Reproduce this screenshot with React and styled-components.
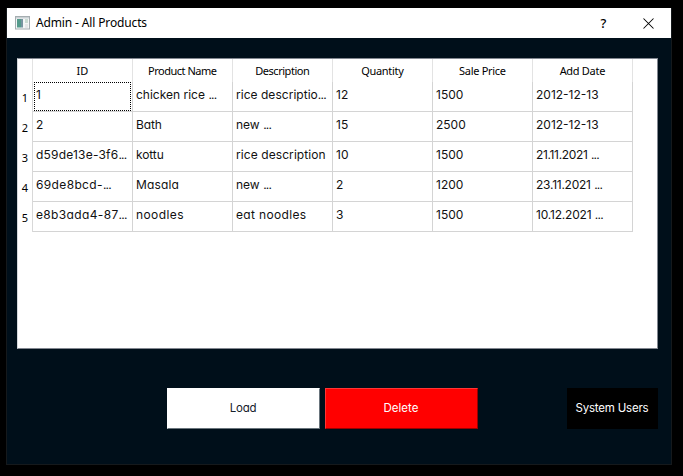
import React from "react";
import styled, { createGlobalStyle } from "styled-components";

const GlobalStyle = createGlobalStyle`
  * { box-sizing: border-box; }
  html, body { margin: 0; background: #000; overflow: hidden; }
`;

const geometric = `
  font-family: Inter, "Open Sans", sans-serif;
  font-feature-settings: "cv11" 1;
`;

const Desktop = styled.div`
  width: 683px;
  height: 476px;
  padding: 8px 11px 11px 6px;
  background: #000;
`;

const Window = styled.div`
  height: 457px;
  display: flex;
  flex-direction: column;
  background: #000f1a;
  border: 1px solid #15191c;
  border-top: 0;
`;

const TitleBar = styled.header`
  height: 30px;
  flex: none;
  display: flex;
  align-items: center;
  padding-left: 8px;
  background: #fff;
`;

const Title = styled.h1`
  flex: 1;
  margin: 0 0 0 6px;
  font: 400 12px/30px "Noto Sans", sans-serif;
  letter-spacing: ${(p) => p.$spacing}px;
  color: #000;
`;

const TitleButton = styled.button`
  width: 45px;
  height: 30px;
  padding: 0;
  border: 0;
  background: none;
  display: grid;
  place-items: center;
  font: 500 13px/28px "Noto Sans", sans-serif;
  color: #000;
`;

const Content = styled.main`
  flex: 1;
  padding: 20px 13px 0 10px;
`;

const TableFrame = styled.div`
  height: 291px;
  background: #fff;
  border: 1px solid #828790;
  border-left-color: #d4d8dc;
`;

const Line = styled.div`
  display: grid;
  grid-template-columns: 15px repeat(6, 100px);
  grid-template-rows: ${(p) => p.$height}px;
`;

const HeaderCell = styled.div`
  height: 23px;
  border-right: 1px solid #e3e3e3;
  text-align: center;
  font: 400 11px/24px "Noto Sans", sans-serif;
  letter-spacing: ${(p) => p.$spacing || 0}px;
  text-indent: ${(p) => p.$spacing || 0}px;
  color: #000;
`;

const RowNumber = styled.div`
  border-right: 1px solid #d8d8d8;
  text-align: center;
  font: 400 11px/32px "Noto Sans", sans-serif;
  color: #000;
`;

const Cell = styled.div`
  ${geometric}
  border-right: 1px solid #d4d4d4;
  border-bottom: 1px solid #d4d4d4;
  padding: ${(p) => (p.$focused ? "0 1px 0 1px" : "0 0 0 3px")};
  font-size: 12px;
  line-height: 25px;
  letter-spacing: ${(p) => p.$spacing || 0}px;
  white-space: nowrap;
  color: #111;
`;

const Ellipsis = styled.span`
  margin-left: ${(p) => (p.$spaced ? 3.5 : 0)}px;
  letter-spacing: -0.8px;
`;

const Focus = styled.div`
  height: 29px;
  width: 97px;
  padding-left: 1px;
  line-height: 23px;
  border: 1px dotted #000;
`;

const Actions = styled.footer`
  display: flex;
  margin-top: 39px;
  padding-left: 150px;
  gap: 5px;
`;

const Button = styled.button`
  ${geometric}
  width: ${(p) => p.$width}px;
  flex: none;
  height: 41px;
  padding: 0 1px 2px 0;
  margin-left: ${(p) => p.$offset || 0}px;
  font-size: 11.5px;
  letter-spacing: ${(p) => p.$spacing || 0}px;
  background: ${(p) => p.$background};
  color: ${(p) => p.$color};
  border: 1px solid;
  border-color: ${(p) => p.$border};
`;

const columns = [
  ["ID", 0],
  ["Product Name", -0.5],
  ["Description", -0.45],
  ["Quantity", -0.3],
  ["Sale Price", -0.3],
  ["Add Date", -0.3],
];

const rows = [
  [["1"], ["chicken rice ..."], ["rice descriptio...", 0.03], ["12"], ["1500"], ["2012-12-13"]],
  [["2"], ["Bath", -0.15], ["new ..."], ["15"], ["2500"], ["2012-12-13"]],
  [["d59de13e-3f6...", 0.2], ["kottu", -0.1], ["rice description", 0.08], ["10"], ["1500"], ["21.11.2021 ...", -0.35]],
  [["69de8bcd-...", 0.35], ["Masala", 0.15], ["new ..."], ["2"], ["1200"], ["23.11.2021 ...", -0.25]],
  [["e8b3ada4-87...", 0.35], ["noodles", 0.4], ["eat noodles", 0.35], ["3"], ["1500"], ["10.12.2021 ...", -0.2]],
];

// The dots of a clipped value are set tighter than its text.
const Value = ({ text }) => {
  if (!text.endsWith("...")) return text;
  const body = text.slice(0, -3);
  return (
    <>
      {body.trimEnd()}
      <Ellipsis $spaced={body.endsWith(" ")}>...</Ellipsis>
    </>
  );
};

const AppIcon = () => (
  <svg width="15" height="14" viewBox="0 0 15 14">
    <rect x="0.5" y="0.5" width="14" height="12.5" fill="#f4f6f6" stroke="#a5adb0" />
    <rect x="1" y="1" width="13" height="1.5" fill="#c9d0d3" />
    <rect x="2" y="3" width="4" height="8.5" fill="#559b8c" />
    <rect x="6" y="3" width="2" height="8.5" fill="#7794a0" />
    <rect x="10" y="3" width="3" height="4" fill="#cadbd2" />
    <rect x="10" y="8" width="3" height="4" fill="#e5e7e8" />
  </svg>
);

const CloseIcon = () => (
  <svg width="11" height="11" viewBox="0 0 11 11" stroke="#000" strokeWidth="1.05">
    <path d="M0.5 0.5L10.5 10.5M10.5 0.5L0.5 10.5" />
  </svg>
);

export default function App() {
  return (
    <Desktop>
      <GlobalStyle />
      <Window>
        <TitleBar>
          <AppIcon />
          <Title $spacing={-0.14}>Admin - All Products</Title>
          <TitleButton aria-label="Help">?</TitleButton>
          <TitleButton aria-label="Close"><CloseIcon /></TitleButton>
        </TitleBar>
        <Content>
          <TableFrame>
            <Line $height={23}>
              <HeaderCell />
              {columns.map(([name, spacing]) => (
                <HeaderCell key={name} $spacing={spacing}>{name}</HeaderCell>
              ))}
            </Line>
            {rows.map((row, r) => (
              <Line key={r} $height={30}>
                <RowNumber>{r + 1}</RowNumber>
                {row.map(([text, spacing], c) => {
                  const focused = r === 0 && c === 0;
                  return (
                    <Cell key={c} $spacing={spacing} $focused={focused}>
                      {focused ? <Focus>{text}</Focus> : <Value text={text} />}
                    </Cell>
                  );
                })}
              </Line>
            ))}
          </TableFrame>
          <Actions>
            <Button $width={153} $spacing={-0.2} $background="#fff" $color="#15202b" $border="#fff #69747c #69747c #fff">Load</Button>
            <Button $width={153} $background="#f00" $color="#fff" $border="#ff3535 #990000 #990000 #ff3535">Delete</Button>
            <Button $width={91} $offset={84} $spacing={-0.2} $background="#000" $color="#fff" $border="#000">System Users</Button>
          </Actions>
        </Content>
      </Window>
    </Desktop>
  );
}
